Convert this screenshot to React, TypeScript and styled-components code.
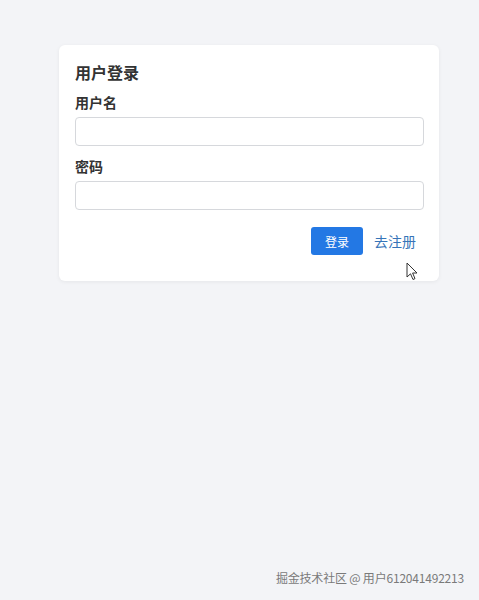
import styled, { createGlobalStyle } from "styled-components";

const GlobalStyle = createGlobalStyle`
  html, body {
    margin: 0;
    padding: 0;
    background: #f3f4f7;
    font-family: "Noto Sans CJK SC", "Noto Sans", sans-serif;
  }
`;

const Page = styled.div`
  position: relative;
  box-sizing: border-box;
  width: 479px;
  height: 600px;
  padding: 45px 40px 0 59px;
  display: flex;
  flex-direction: column;
`;

const Card = styled.div`
  box-sizing: border-box;
  width: 380px;
  background: #ffffff;
  border-radius: 6px;
  box-shadow: 0 1px 4px rgba(0, 0, 0, 0.06);
  padding: 16px 15px 26px 16px;
  display: flex;
  flex-direction: column;
`;

const Title = styled.h2`
  margin: 0;
  font-size: 16px;
  line-height: 22px;
  font-weight: 700;
  color: #333;
`;

const Field = styled.label`
  display: flex;
  flex-direction: column;
  gap: 5px;
  margin-top: ${(p: { $top: number }) => p.$top}px;
`;

const Label = styled.span`
  font-size: 14px;
  line-height: 20px;
  font-weight: 700;
  color: #333;
`;

const Input = styled.input`
  box-sizing: border-box;
  height: 29px;
  width: 349px;
  border: 1px solid #d6d8dc;
  border-radius: 4px;
  background: #fff;
  padding: 0 8px;
  font-family: inherit;
  font-size: 14px;
  outline: none;
`;

const Actions = styled.div`
  display: flex;
  justify-content: flex-end;
  align-items: center;
  gap: 11px;
  margin-top: 17px;
  padding-right: 8px;
`;

const PrimaryButton = styled.button`
  box-sizing: border-box;
  width: 52px;
  height: 28px;
  border: none;
  border-radius: 3px;
  background: #2378e4;
  color: #fff;
  font-family: inherit;
  font-size: 12px;
  cursor: pointer;
`;

const LinkButton = styled.a`
  color: #3674b8;
  font-size: 14px;
  text-decoration: none;
  cursor: pointer;
`;

const Cursor = styled.svg`
  position: absolute;
  left: 406px;
  top: 262px;
`;

const Watermark = styled.div`
  position: absolute;
  right: 15px;
  bottom: 14px;
  font-size: 12px;
  color: #7a7a7a;
  letter-spacing: -0.2px;
`;

export default function App() {
  return (
    <>
      <GlobalStyle />
      <Page>
        <Card>
          <Title>用户登录</Title>
          <Field $top={9}>
            <Label>用户名</Label>
            <Input type="text" />
          </Field>
          <Field $top={10}>
            <Label>密码</Label>
            <Input type="password" />
          </Field>
          <Actions>
            <PrimaryButton>登录</PrimaryButton>
            <LinkButton>去注册</LinkButton>
          </Actions>
        </Card>
        <Cursor width="13" height="20" viewBox="0 0 13 20">
          <path
            d="M1 1 L1 15 L4.5 11.8 L7 17.5 L9 16.6 L6.6 11 L11 11 Z"
            fill="#fff"
            stroke="#333"
            strokeWidth="1"
            strokeLinejoin="round"
          />
        </Cursor>
        <Watermark>掘金技术社区 @ 用户612041492213</Watermark>
      </Page>
    </>
  );
}
